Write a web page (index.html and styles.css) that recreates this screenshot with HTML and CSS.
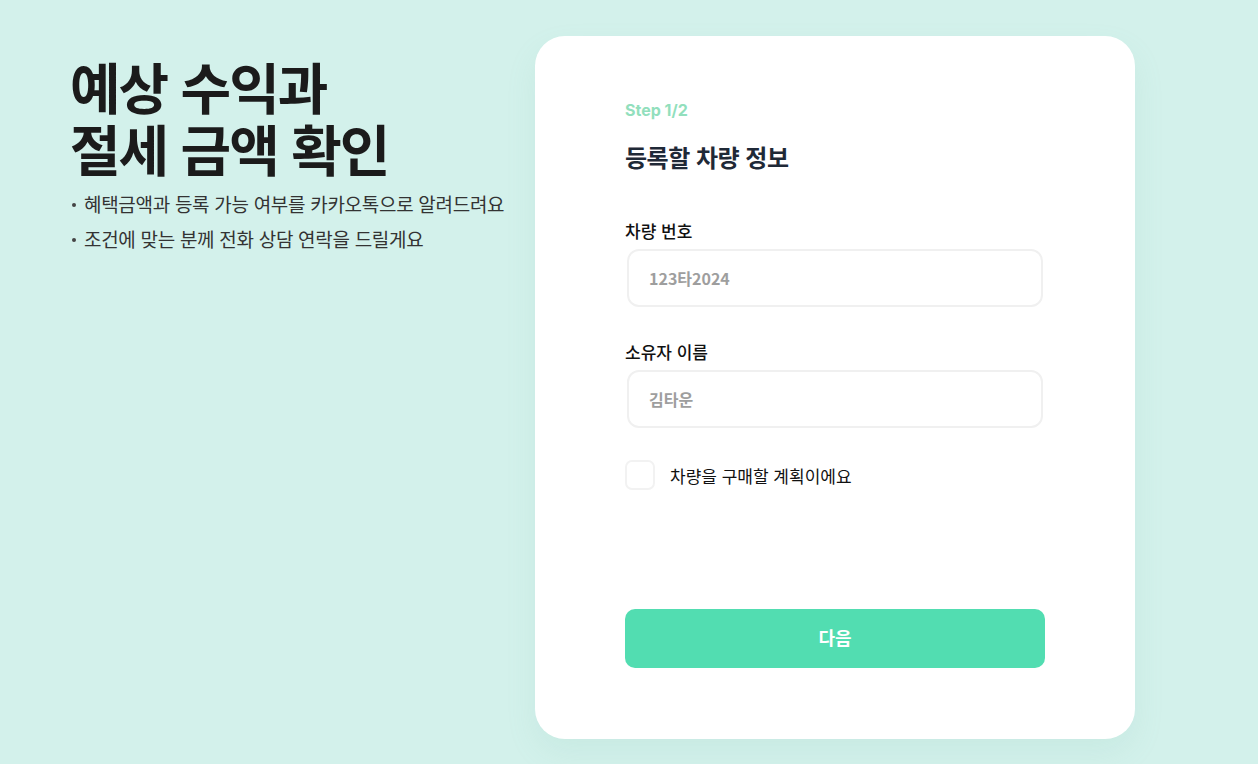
FILE: index.html
```html
<!DOCTYPE html>
<html lang="ko">
<head>
    <meta charset="UTF-8">
    <meta name="viewport" content="width=device-width, initial-scale=1.0">
    <title>예상 수익과 절세 금액 확인</title>
    <link rel="stylesheet" href="styles.css">
</head>
<body>
    <div class="page">
        <div class="intro">
            <h1 class="intro-title">예상 수익과<br>절세 금액 확인</h1>
            <ul class="intro-list">
                <li>혜택금액과 등록 가능 여부를 카카오톡으로 알려드려요</li>
                <li>조건에 맞는 분께 전화 상담 연락을 드릴게요</li>
            </ul>
        </div>
        <form class="card">
            <div class="step">Step 1/2</div>
            <h2 class="card-title">등록할 차량 정보</h2>
            <label class="field">
                <span class="field-label">차량 번호</span>
                <input class="field-input" placeholder="123타2024">
            </label>
            <label class="field">
                <span class="field-label">소유자 이름</span>
                <input class="field-input" placeholder="김타운">
            </label>
            <label class="check">
                <input type="checkbox" class="check-box">
                <span>차량을 구매할 계획이에요</span>
            </label>
            <button type="button" class="next-btn">다음</button>
        </form>
    </div>
</body>
</html>
```

FILE: styles.css
```css
body { margin: 0; background-color: #d3f1eb; font-family: "Noto Sans CJK KR", "Noto Sans", sans-serif; color: #1a1a1a; }
.page { display: flex; padding: 36px 0 0 70px; height: 764px; box-sizing: border-box; }
.intro { width: 465px; }
.intro-title { margin: 18px 0 0; font-size: 55px; line-height: 62px; font-weight: 700; letter-spacing: -2px; color: #1b1b1b; }
.intro-list { list-style: none; padding: 0; margin: 8px 0 0 2px; }
.intro-list li { display: flex; align-items: center; gap: 8px; font-size: 19px; line-height: 35px; color: #333; letter-spacing: -0.3px; }
.intro-list li::before { content: ""; width: 4px; height: 4px; border-radius: 50%; background: #444; margin-top: 2px; }
.card { width: 600px; height: 703px; box-sizing: border-box; background: #fff; border-radius: 30px; padding: 64px 90px 0; display: flex; flex-direction: column; box-shadow: 0 14px 30px rgba(120, 190, 175, 0.12); }
.step { font-size: 16px; font-weight: 700; color: #92dfbd; line-height: 20px; font-family: "Inter", "Noto Sans CJK KR", sans-serif; }
.card-title { margin: 20px 0 0; font-size: 24px; line-height: 34px; font-weight: 700; color: #1f2937; letter-spacing: -0.5px; }
.field { display: flex; flex-direction: column; margin-top: 45px; }
.field + .field { margin-top: 33px; }
.field-label { font-size: 17px; font-weight: 500; line-height: 24px; color: #111; }
.field-input { margin: 6px 0 0 2px; width: 416px; height: 58px; box-sizing: border-box; border: 2px solid #f0f0f0; border-radius: 12px; padding: 0 20px; font-size: 16px; font-weight: 700; font-family: inherit; outline: none; }
.field-input::placeholder { color: #9e9e9e; }
.check { display: flex; align-items: center; gap: 15px; margin-top: 32px; font-size: 17px; font-weight: 400; color: #111; }
.check-box { appearance: none; margin: 0; width: 30px; height: 30px; border: 2px solid #f2f2f2; border-radius: 7px; }
.next-btn { margin-top: auto; margin-bottom: 71px; width: 420px; height: 59px; padding: 0 0 4px; border: none; border-radius: 10px; background: #52ddb1; color: #fff; font-size: 18px; font-weight: 700; font-family: inherit; cursor: pointer; }
```
